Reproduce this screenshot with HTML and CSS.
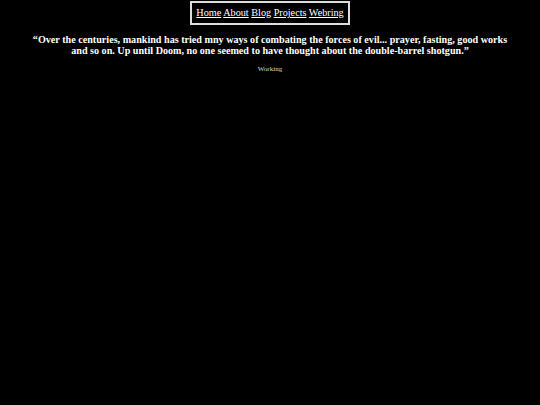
FILE: index.html
```
<!DOCTYPE html>
<html>
<head>
<meta charset="utf-8">
<link rel="stylesheet" href="styles.css">
</head>
<body>
<div class="top">
<nav class="nav"><a href="#">Home</a> <a href="#">About</a> <a href="#">Blog</a> <a href="#">Projects</a> <a href="#">Webring</a></nav>
</div>
<p class="quote">“Over the centuries, mankind has tried mny ways of combating the forces of evil... prayer, fasting, good works and so on. Up until Doom, no one seemed to have thought about the double-barrel shotgun.”</p>
<p class="status">Working</p>
</body>
</html>
```
FILE: styles.css
```
html, body {
  margin: 0;
  background: #000;
  color: #fff;
  font-family: "Liberation Serif", "Times New Roman", serif;
}
.top {
  display: flex;
  justify-content: center;
  padding-top: 1px;
}
.nav {
  border: 2px solid #ddd;
  padding: 4px 4px;
  font-size: 10.2px;
  line-height: 12px;
}
.nav a {
  color: #fff;
}
.quote {
  margin: 9px 30px 0;
  text-align: center;
  font-weight: bold;
  font-size: 10.15px;
  line-height: 11px;
}
.status {
  margin: 9px 0 0;
  text-align: center;
  font-size: 7px;
  font-weight: normal;
  color: #ddd;
}
```
